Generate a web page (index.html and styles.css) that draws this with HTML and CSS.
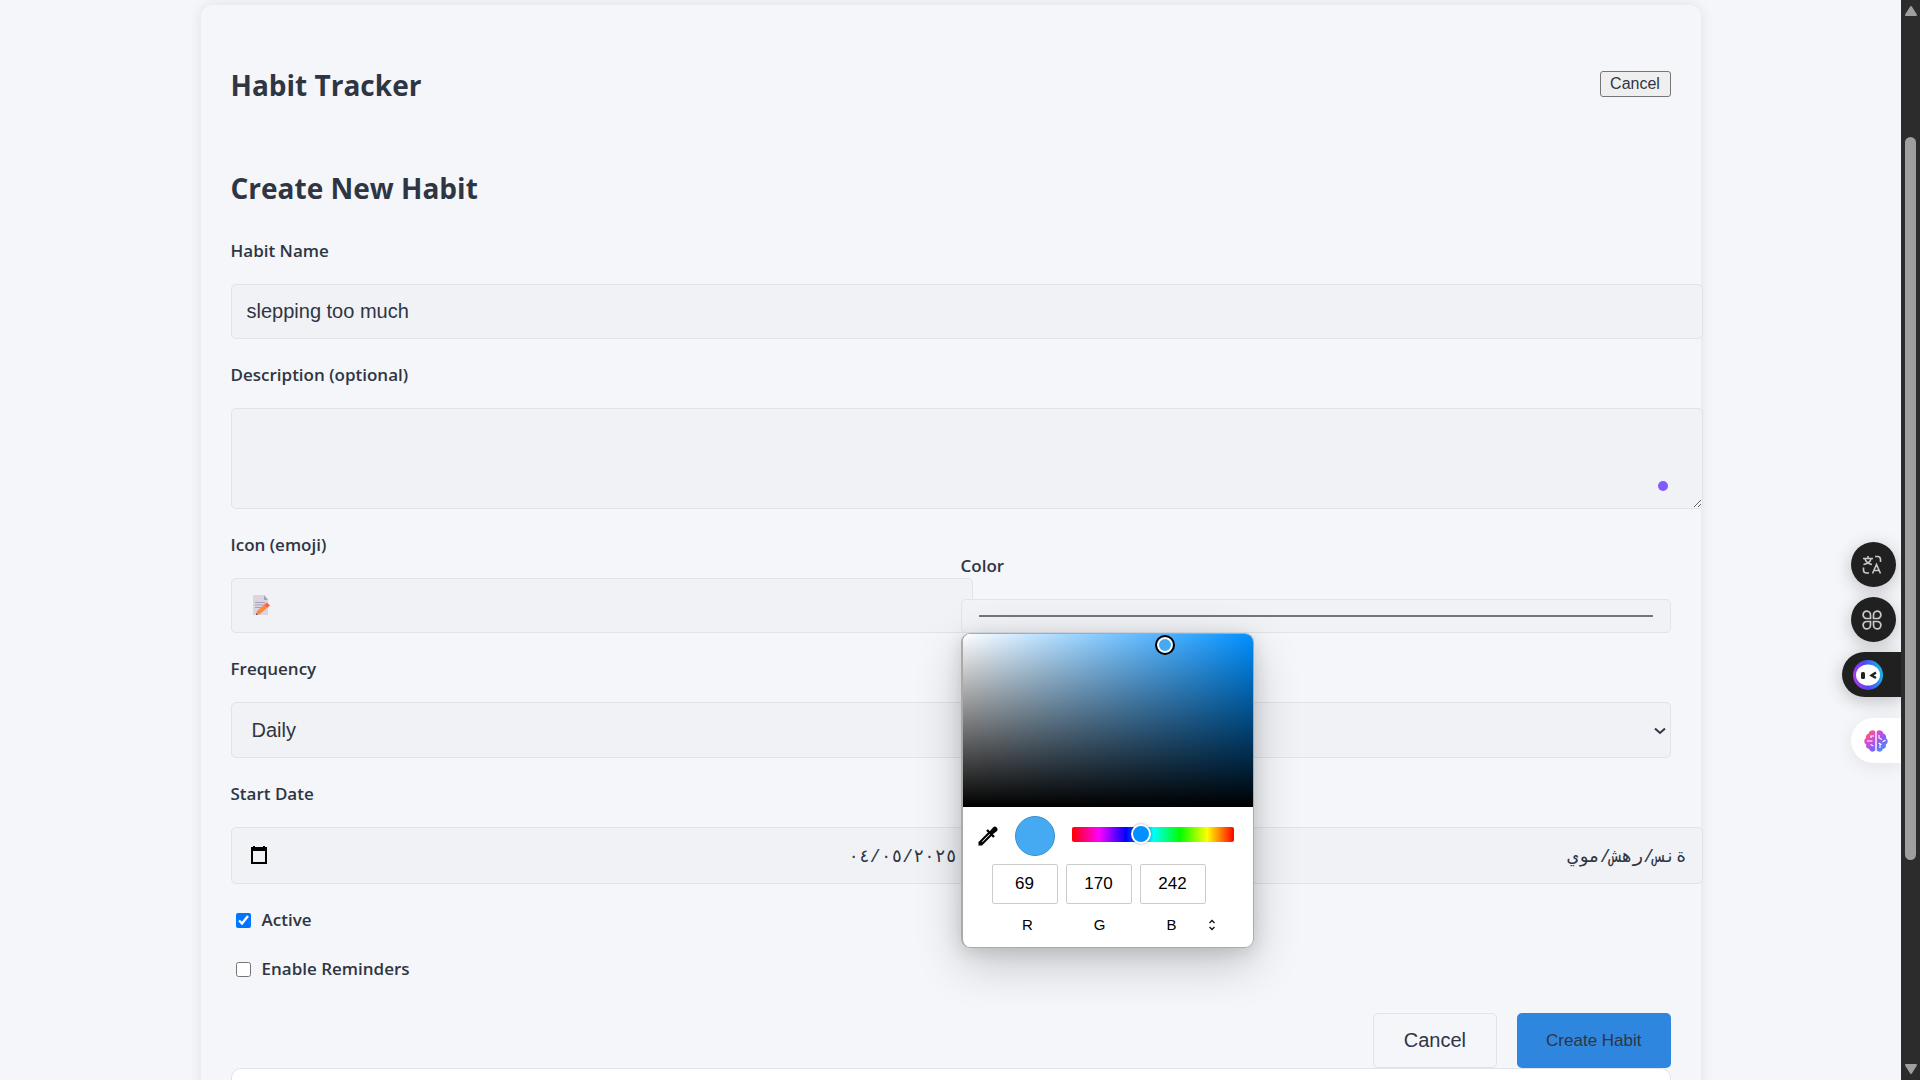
FILE: index.html
```html
<!DOCTYPE html>
<html lang="en">
<head>
<meta charset="utf-8">
<meta name="viewport" content="width=device-width, initial-scale=1">
<title>Habit Tracker</title>
<link rel="stylesheet" href="styles.css">
</head>
<body>
<div class="viewport">
  <main class="page">
    <section class="card">
      <header class="card-header">
        <h2 class="title">Habit Tracker</h2>
        <button class="plain-button" type="button">Cancel</button>
      </header>
      <form class="habit-form">
        <h2 class="title form-title">Create New Habit</h2>
        <div class="field">
          <label for="name">Habit Name</label>
          <input class="control" id="name" type="text" value="slepping too much">
        </div>
        <div class="field">
          <label for="description">Description (optional)</label>
          <div class="area-wrap">
            <textarea class="control area" id="description"></textarea>
            <span class="assist-dot"></span>
          </div>
        </div>
        <div class="row">
          <div class="field icon-field">
            <label for="icon">Icon (emoji)</label>
            <div class="icon-wrap">
              <input class="control" id="icon" type="text">
              <svg class="memo" viewBox="0 0 18 20" aria-hidden="true">
                <path d="M0 0h11l4 4v16H0z" fill="#dcd3e3"/>
                <path d="M11 0l4 5h-4z" fill="#a9a1b3"/>
                <path d="M2 7.500h10M2 10h10M2 12.500h7" stroke="#a9a2b6" stroke-width="1"/>
                <path d="M4 16l7-6 3 3-7 6-4 1z" fill="#fb8a3a"/>
                <path d="M11 10l3-2.500 3 3-3 2.500z" fill="#fa6152"/>
                <path d="M3 20l.5-2 1.500 1.500z" fill="#5b3a72"/>
              </svg>
            </div>
          </div>
          <div class="field color-field">
            <label for="color">Color</label>
            <div class="color-wrap">
              <button class="color-control" id="color" type="button"><span class="color-line"></span></button>
              <div class="picker">
                <div class="shade"><span class="shade-handle"></span></div>
                <div class="picker-main">
                  <svg class="dropper" viewBox="0 0 20 20" aria-hidden="true">
                    <path d="M11.500 6.500L2.500 15.500 2 18l2.500-.5 9-9" fill="none" stroke="#000" stroke-width="2"/>
                    <path d="M9 4l7 7" stroke="#000" stroke-width="2.400"/>
                    <path d="M11.500 5.500l3.500-4a2.600 2.600 0 0 1 3.700 3.700l-4.200 3.300z"/>
                    <path d="M.5 15.500h4v4h-4z"/>
                  </svg>
                  <span class="swatch"></span>
                  <div class="hue"><span class="hue-handle"></span></div>
                </div>
                <div class="channels">
                  <input id="r" type="text" value="69">
                  <input id="g" type="text" value="170">
                  <input id="b" type="text" value="242">
                </div>
                <div class="channel-names">
                  <label for="r">R</label>
                  <label for="g">G</label>
                  <label for="b">B</label>
                  <svg class="spin" viewBox="0 0 8 12" aria-hidden="true"><path d="M1.500 4L4 1.500 6.500 4M1.500 8L4 10.500 6.500 8" fill="none" stroke="#111" stroke-width="1.300"/></svg>
                </div>
              </div>
            </div>
          </div>
        </div>
        <div class="field">
          <label for="frequency">Frequency</label>
          <div class="select-wrap">
            <select class="control select" id="frequency"><option>Daily</option></select>
            <svg class="chevron" viewBox="0 0 12 8" aria-hidden="true"><path d="M1 1.500l5 4.500 5-4.500" fill="none" stroke="#2d3748" stroke-width="2"/></svg>
          </div>
        </div>
        <div class="row">
          <div class="field">
            <label for="start">Start Date</label>
            <div class="date-wrap">
              <input class="control date" id="start" type="text" dir="rtl" value="٠٤/٠٥/٢٠٢٥">
              <svg class="calendar" viewBox="0 0 18 20" aria-hidden="true"><path d="M4 1v3M14 1v3" stroke="#000" stroke-width="2"/><path d="M2 3h14v15H2z" fill="none" stroke="#000" stroke-width="2"/><path d="M1 2h16v4H1z"/></svg>
            </div>
          </div>
          <div class="field end-field">
            <input class="control date" type="text" dir="rtl" aria-label="End Date" value="ةنس/رهش/موي">
          </div>
        </div>
        <label class="check"><input type="checkbox" checked>Active</label>
        <label class="check"><input type="checkbox">Enable Reminders</label>
        <div class="actions">
          <button class="cancel" type="button">Cancel</button>
          <button class="create" type="submit">Create Habit</button>
        </div>
      </form>
      <div class="list-card"></div>
    </section>
  </main>
  <aside class="tools">
    <button class="tool" type="button" aria-label="Translate">
      <svg viewBox="0 0 20 20" fill="none" stroke="#c9c9c9" stroke-width="1.600"><path d="M1 3.500h10M6 1v2.500M3 4c1 3 4 5 7 5.500M9 4C8 7 5 9 1.500 9.500M13 1.500h2.500a3 3 0 0 1 3 3V7M1.500 12.500v2.500a3 3 0 0 0 3 3H7M10.500 18.500l4-9 4 9M12 15.500h5"/></svg>
    </button>
    <button class="tool" type="button" aria-label="Apps">
      <svg viewBox="0 0 20 20" fill="none" stroke="#c9c9c9" stroke-width="1.700"><path d="M8.500 8.500H5A3.700 3.700 0 1 1 8.500 5zM11.500 8.500V5A3.700 3.700 0 1 1 15 8.500zM8.500 11.500V15A3.700 3.700 0 1 1 5 11.500zM11.500 11.500H15a3.700 3.700 0 1 1-3.500 3.500z"/></svg>
    </button>
    <button class="tool tab" type="button" aria-label="Assistant">
      <svg viewBox="0 0 30 30"><defs><linearGradient id="ring" x1="0" y1=".7" x2="1" y2=".5"><stop offset="0" stop-color="#b637f0"/><stop offset=".45" stop-color="#5145f5"/><stop offset="1" stop-color="#18b5e8"/></linearGradient></defs><circle cx="15" cy="15" r="15" fill="url(#ring)"/><ellipse cx="15" cy="15" rx="12" ry="10.500" fill="#fff"/><rect x="8" y="12" width="4" height="7" rx="1.500" fill="#222"/><path d="M23 12.500l-4.500 3 4.500 2.500" fill="none" stroke="#222" stroke-width="2.400"/></svg>
    </button>
    <button class="tool tab light" type="button" aria-label="Brain">
      <svg viewBox="0 0 24 24"><defs><linearGradient id="brain" x1="0" y1="0" x2="1" y2="1"><stop offset="0" stop-color="#ff7a1a"/><stop offset=".3" stop-color="#e948c4"/><stop offset=".6" stop-color="#8a5cf6"/><stop offset="1" stop-color="#22a7f5"/></linearGradient></defs><path fill="url(#brain)" d="M11.300 2.500v19c-2 2-5.500 1.300-6-1.500C2.500 20 1.500 17.500 2.300 15.500-.3 14-.3 10.500 2 9 1.500 6.500 3 5 4.500 4.700 5.500 1 9.500.5 11.300 2.500zM12.700 2.500v19c2 2 5.500 1.300 6-1.500 2.800 0 3.800-2.500 3-4.500 2.600-1.500 2.600-5 .3-6.500.5-2.500-1-4-2.500-4.300C18.500 1 14.500.5 12.700 2.500z"/><path d="M10 7H7v2M3 12h5.500M6.500 15.500l3 1.500M15 6v3l3 1.500M21.500 11l-3 2M16 19v-4M14.500 14l3 1.500" fill="none" stroke="#fff" stroke-width="1.100"/></svg>
    </button>
  </aside>
  <div class="scrollbar" aria-hidden="true">
    <svg class="arrow" viewBox="0 0 12 10"><path d="M6 1l5 8H1z" fill="#9f9f9f" stroke="#9f9f9f" stroke-width="2" stroke-linejoin="round"/></svg>
    <div class="track"><div class="thumb"></div></div>
    <svg class="arrow" viewBox="0 0 12 10"><path d="M6 9l5-8H1z" fill="#9f9f9f" stroke="#9f9f9f" stroke-width="2" stroke-linejoin="round"/></svg>
  </div>
</div>
</body>
</html>
```
FILE: styles.css
```css
* { box-sizing: border-box; }
body {
  margin: 0;
  background: #f4f6fa;
  color: #2f3542;
  font: 17px/24px "Open Sans", "Noto Sans", sans-serif;
}
button, input, select, textarea {
  font-family: "Liberation Sans", Arial, sans-serif;
  color: inherit;
}
.viewport { display: flex; height: 100vh; overflow: hidden; }
.page { flex: 1; min-width: 0; padding: 5px 20px 0; }
.card {
  max-width: 1500px;
  min-height: 1200px;
  margin: 0 auto;
  padding: 56px 30px 30px;
  border-radius: 12px;
  box-shadow: 0 0 14px rgba(0, 0, 0, .09);
}
.card-header {
  display: flex;
  justify-content: space-between;
  align-items: center;
  height: 48px;
  margin-bottom: 56px;
}
.title { margin: 0; font-size: 28px; line-height: 46px; font-weight: 700; }
.plain-button {
  width: 71px;
  height: 26px;
  margin-bottom: 2px;
  padding: 0;
  border: 1px solid #767676;
  border-radius: 3px;
  background: #efefef;
  font-size: 16px;
  line-height: 20px;
}
.form-title { margin-bottom: 28px; }
.field { display: flex; flex-direction: column; margin-bottom: 24px; }
.field > label { margin-bottom: 21px; font-weight: 600; }
.control {
  display: block;
  width: calc(100% + 32px);
  height: 55px;
  padding: 0 15px;
  border: 1px solid #dfe3ea;
  border-radius: 5px;
  background: #f0f2f5;
  font-size: 20px;
  outline: 0;
}
.area-wrap, .icon-wrap, .color-wrap, .select-wrap, .date-wrap { position: relative; }
.area { height: 101px; resize: vertical; }
.assist-dot {
  position: absolute;
  right: 3px;
  bottom: 18px;
  width: 10px;
  height: 10px;
  border-radius: 50%;
  background: #805bff;
}
.row { display: grid; grid-template-columns: 1fr 1fr; gap: 20px; align-items: end; }
.memo { position: absolute; left: 22px; top: 17px; width: 18px; height: 20px; }
.color-control {
  display: flex;
  align-items: center;
  width: 100%;
  height: 34px;
  padding: 0 17px;
  border: 1px solid #dfe3ea;
  border-radius: 5px;
  background: #f0f2f5;
}
.color-line { flex: 1; height: 2px; background: #767676; }
.picker {
  position: absolute;
  z-index: 2;
  top: 100%;
  left: 0;
  width: 293px;
  height: 315px;
  overflow: hidden;
  border: 1px solid #aaa;
  border-left-width: 2px;
  border-radius: 9px;
  background: #fff;
  color: #000;
}
.color-wrap::after {
  content: "";
  position: absolute;
  z-index: 1;
  top: 100%;
  left: 0;
  width: 293px;
  height: 315px;
  border-radius: 9px;
  box-shadow: 0 16px 48px rgba(0, 0, 0, .2), 0 4px 18px rgba(0, 0, 0, .12);
}
.shade {
  position: relative;
  height: 173px;
  background: linear-gradient(to top, #000, transparent), linear-gradient(to right, #fff, #0090ff);
}
.shade-handle {
  position: absolute;
  left: 192px;
  top: 1px;
  width: 20px;
  height: 20px;
  border: 2px solid #000;
  border-radius: 50%;
  background: #45aaf2;
  box-shadow: inset 0 0 0 2px #fff;
}
.picker-main { display: flex; align-items: center; height: 57px; padding: 0 19px 0 15px; }
.dropper { width: 20px; height: 20px; margin-right: 17px; }
.swatch { width: 40px; height: 40px; margin-right: 17px; border: 1px solid #3c8fcd; border-radius: 50%; background: #45aaf2; }
.hue {
  position: relative;
  flex: 1;
  height: 15px;
  margin-bottom: 2px;
  border-radius: 2px;
  background: linear-gradient(to right, red, #f0f, #00f, #0ff, #0f0, #ff0, red);
}
.hue-handle {
  position: absolute;
  left: 59px;
  top: -3px;
  width: 20px;
  height: 20px;
  border: 2px solid #fff;
  border-radius: 50%;
  background: #0090ff;
  box-shadow: 0 0 3px rgba(0, 0, 0, .35);
}
.channels { display: flex; gap: 8px; padding-left: 29px; }
.channels input {
  width: 66px;
  height: 40px;
  padding: 0;
  border: 1px solid #ccc;
  border-radius: 2px;
  background: #fff;
  font-size: 17px;
  text-align: center;
}
.channel-names { display: flex; align-items: center; margin-top: 9px; padding-left: 29px; }
.channel-names label { width: 72px; font: 15px/24px "Liberation Sans", Arial, sans-serif; text-align: center; }
.spin { width: 8px; height: 12px; }
.select { width: 100%; height: 56px; padding: 0 20px; appearance: none; }
.chevron { position: absolute; right: 5px; top: 25px; width: 12px; height: 8px; }
.date { height: 57px; font-family: "Liberation Mono", "DejaVu Sans Mono", monospace; font-size: 18px; }
.calendar { position: absolute; left: 19px; top: 18px; width: 18px; height: 20px; }
.check { display: flex; align-items: center; height: 24px; margin-bottom: 25px; font-weight: 600; }
.check input { width: 15px; height: 15px; margin: 0 11px 0 5px; accent-color: #0075ff; }
.actions { display: flex; justify-content: flex-end; gap: 20px; margin-top: 32px; }
.cancel, .create { height: 55px; border-radius: 5px; }
.cancel { padding: 0 30px; border: 1px solid #dfe3ea; background: transparent; font-size: 20px; }
.create { padding: 0 29px; border: 0; background: #2f86df; font-size: 17px; }
.list-card { height: 120px; border: 1px solid #dfe3ea; border-radius: 10px; background: #fff; }
.tools {
  position: absolute;
  right: 19px;
  top: 542px;
  display: flex;
  flex-direction: column;
  align-items: flex-end;
  gap: 10px;
}
.tool {
  display: flex;
  align-items: center;
  justify-content: center;
  width: 45px;
  height: 45px;
  margin-right: 5px;
  padding: 0 3px 0 0;
  border: 0;
  border-radius: 50%;
  background: #202020;
  box-shadow: 0 4px 18px rgba(0, 0, 0, .22);
}
.tool svg { width: 20px; height: 20px; }
.tool.tab { justify-content: flex-start; width: 59px; margin-right: 0; padding: 0 0 0 11px; border-radius: 23px 0 0 23px; }
.tool.tab svg { width: 30px; height: 30px; }
.tool.light { width: 50px; margin-top: 11px; padding-left: 13px; background: #fff; box-shadow: 0 4px 18px rgba(0, 0, 0, .08); }
.tool.light svg { width: 24px; height: 24px; }
.scrollbar {
  position: relative;
  z-index: 3;
  display: flex;
  flex-direction: column;
  align-items: center;
  width: 19px;
  padding: 6px 0;
  background: #2c2c2c;
}
.arrow { width: 12px; height: 10px; }
.track { flex: 1; padding-top: 121px; }
.thumb { width: 11px; height: 78%; border-radius: 6px; background: #9f9f9f; }
```
